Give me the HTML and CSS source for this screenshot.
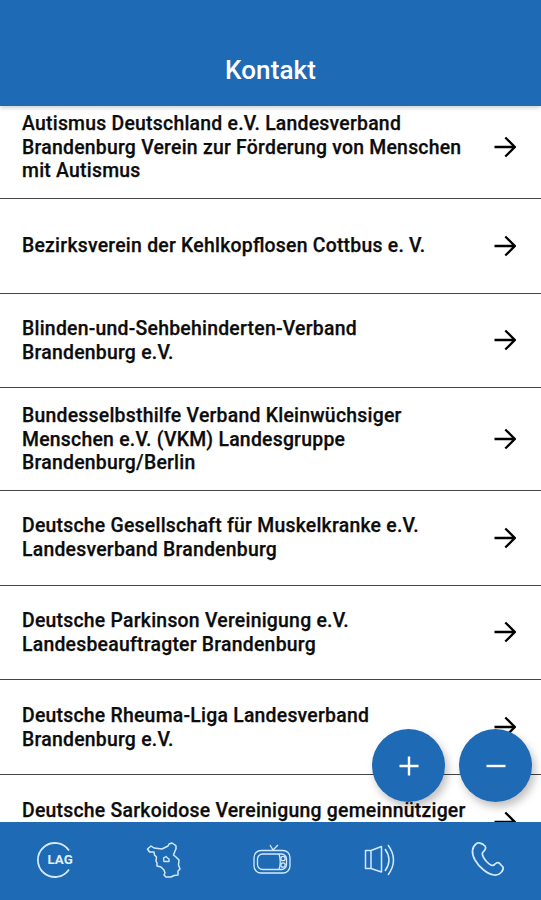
FILE: index.html
```html
<!DOCTYPE html>
<html lang="de">
<head>
<meta charset="utf-8">
<title>Kontakt</title>
<link rel="stylesheet" href="styles.css">
</head>
<body>
<svg class="defs" width="0" height="0"><symbol id="arrow" viewBox="0 0 22 22"><path d="M.5 11H20.500M11.300 1.500L20.800 11L11.300 20.500" fill="none" stroke="currentColor" stroke-width="2.300"/></symbol></svg>
<div class="app">
<header class="header"><h1>Kontakt</h1></header>
<main class="list">
<a class="row tall first"><span>Autismus Deutschland e.V. Landesverband<br>Brandenburg Verein zur Förderung von Menschen<br>mit Autismus</span><svg class="arrow"><use href="#arrow"/></svg></a>
<a class="row"><span>Bezirksverein der Kehlkopflosen Cottbus e. V.</span><svg class="arrow"><use href="#arrow"/></svg></a>
<a class="row"><span>Blinden-und-Sehbehinderten-Verband<br>Brandenburg e.V.</span><svg class="arrow"><use href="#arrow"/></svg></a>
<a class="row tall"><span>Bundesselbsthilfe Verband Kleinwüchsiger<br>Menschen e.V. (VKM) Landesgruppe<br>Brandenburg/Berlin</span><svg class="arrow"><use href="#arrow"/></svg></a>
<a class="row"><span>Deutsche Gesellschaft für Muskelkranke e.V.<br>Landesverband Brandenburg</span><svg class="arrow"><use href="#arrow"/></svg></a>
<a class="row"><span>Deutsche Parkinson Vereinigung e.V.<br>Landesbeauftragter Brandenburg</span><svg class="arrow"><use href="#arrow"/></svg></a>
<a class="row"><span>Deutsche Rheuma-Liga Landesverband<br>Brandenburg e.V.</span><svg class="arrow"><use href="#arrow"/></svg></a>
<a class="row last"><span>Deutsche Sarkoidose Vereinigung gemeinnütziger</span><svg class="arrow"><use href="#arrow"/></svg></a>
</main>
<div class="zoom">
<button class="fab" aria-label="Größer"><svg viewBox="0 0 20 20"><path d="M.5 10H19.500M10 .5V19.500"/></svg></button>
<button class="fab" aria-label="Kleiner"><svg viewBox="0 0 20 20"><path d="M.5 10H19.500"/></svg></button>
</div>
<nav class="tabs">
<a><svg viewBox="0 0 40 40"><path d="M32 10.500A17 17 0 1 0 32 29.500" stroke-width="1.800"/><text x="10.500" y="24.300">LAG</text></svg></a>
<a><svg viewBox="0 0 40 40"><path d="M2.500 9L6 6L9 8L13 8.500L17 9L20 7.500L23 6L24 4L27 3L30 5L31 6V9L30 11L28.500 15L31 17L34 20L33.500 25L35 29L33 31V35L29 35.500L26 37L21 37L19 35L20 33L19 30L16 27L12 26V23L11 21L11.500 17L9.500 15L9 12L4.500 12Z" stroke-width="1.500"/><path d="M18.500 18L21 16.500L22.500 18L24 19V21.500H19Z" stroke-width="1.400"/></svg></a>
<a><svg viewBox="0 0 40 40"><rect x="2" y="10.500" width="36" height="22.500" rx="7"/><rect x="5.500" y="14" width="29" height="15.500" rx="5"/><path d="M18 5L21 10L26 5M27 14Q29.500 22 27 29.500"/><circle cx="31" cy="18.500" r="2.200"/><circle cx="31" cy="25" r="2.200"/></svg></a>
<a><svg viewBox="0 0 40 40"><path d="M5.500 10.500H11V28.500H5.500ZM11 10.500L21.500 6.500V32L11 28.500M25 9Q33 20 25 31M28 5Q39 20 28 35" stroke-width="1.500"/></svg></a>
<a><svg viewBox="0 0 40 40"><path d="M8 4C10 2 14 3 17 6C19 9 16 11 15 12C13 14 16 19 19 22C22 25 25 27 27 24C29 22 31 22 33 25L35 27C36 30 32 36 26 35C19 34 11 27 7 20C3 13 4 7 8 4Z" stroke-width="1.700"/></svg></a>
</nav>
</div>
</body>
</html>
```
FILE: styles.css
```css
* { box-sizing: border-box; }
body { margin: 0; font-family: Roboto, "Liberation Sans", sans-serif; background: #fff; }
.defs { position: absolute; }
.app { position: relative; height: 900px; display: flex; flex-direction: column; overflow: hidden; }
.header { flex: 0 0 105.600px; background: #1e6ab4; color: #fff; display: flex; justify-content: center; align-items: flex-end; padding-bottom: 20px; z-index: 2; box-shadow: 0 1px 5px rgba(0,0,0,.25); }
h1 { margin: 0; font-size: 26px; line-height: 32px; font-weight: 500; letter-spacing: .1px; }
.list { flex: 1; min-height: 0; overflow: hidden; }
.row { height: 94.800px; border-bottom: 1.500px solid #444; padding: 0 25px 0 22px; display: flex; align-items: center; justify-content: space-between; color: #0c0c0c; font-size: 19.400px; line-height: 23.800px; letter-spacing: .24px; font-feature-settings: "liga" 1; font-weight: 500; -webkit-text-stroke: .25px #0c0c0c; white-space: nowrap; }
.row span { padding-top: 1px; }
.row.tall { height: 102.400px; }
.row.tall span { padding-top: 0.800px; }
.row.first { margin-top: -9.200px; }
.row.last span { padding-bottom: 23.800px; }
.arrow { width: 22px; height: 22px; flex: none; color: #000; }
.zoom { position: absolute; right: 9px; bottom: 98px; display: flex; gap: 14px; z-index: 2; }
.fab { width: 73px; height: 73px; padding: 0; border: 0; border-radius: 50%; background: #1e6ab4; display: flex; align-items: center; justify-content: center; box-shadow: 3px 5px 8px rgba(0,0,0,.25); }
.fab svg { width: 20px; height: 20px; fill: none; stroke: #fff; stroke-width: 2.400; }
.tabs { flex: 0 0 78.500px; background: #1e6ab4; display: flex; align-items: flex-start; padding: 18px 0 0 2px; z-index: 3; }
.tabs a { flex: 1; display: flex; justify-content: center; }
.tabs svg { width: 40px; height: 40px; margin-left: 2px; fill: none; stroke: #d3e9ff; stroke-width: 1.300; stroke-linejoin: round; overflow: visible; }
.tabs text { fill: #e2f1ff; stroke: none; font: bold 13.300px Roboto, sans-serif; }
```
